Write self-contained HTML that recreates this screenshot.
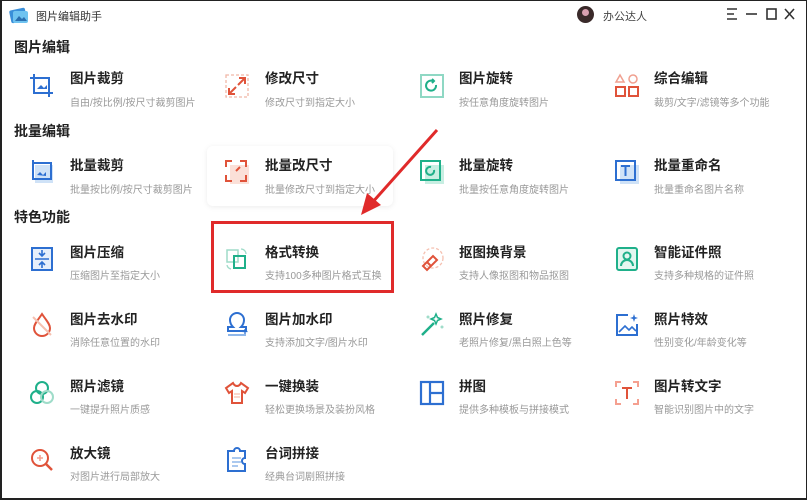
<!DOCTYPE html>
<html><head><meta charset="utf-8"><style>
*{margin:0;padding:0;box-sizing:border-box}
body{width:807px;height:500px;background:#fff;font-family:"Liberation Sans","Noto Sans CJK SC",sans-serif;position:relative;overflow:hidden}
.frame{position:absolute;left:0;top:0;width:807px;height:500px;border:2px solid #222;border-top-width:1px;border-right-width:1px}
.a{position:absolute}
.h{position:absolute;left:14px;font-size:14px;font-weight:bold;color:#222}
.card{position:absolute;width:186px;height:60px;border-radius:6px}
.t{position:absolute;font-size:13.5px;font-weight:bold;color:#222;white-space:nowrap}
.s{position:absolute;font-size:10px;color:#999;white-space:nowrap}
svg.i{position:absolute;width:26px;height:26px;fill:none;stroke-width:2}
</style></head><body>
<div class="frame"></div>
<svg class="a" style="left:8px;top:5px" width="22" height="20" viewBox="0 0 22 20"><rect x="2" y="4" width="16" height="13" rx="2" fill="#3a8fd9" transform="rotate(-12 10 10)"/><rect x="5" y="6" width="15" height="12" rx="2" fill="#6fc3f0"/><path d="M7 16l4-5 3 3 2-2 3 4z" fill="#2a6fb0"/></svg>
<div class="a" style="left:36px;top:8px;font-size:11px;color:#333">图片编辑助手</div>
<div class="a" style="left:577px;top:6px;width:17px;height:17px;border-radius:50%;background:#3a2a2a"></div>
<div class="a" style="left:582px;top:9px;width:7px;height:7px;border-radius:50%;background:#d9a0b0"></div>
<div class="a" style="left:603px;top:8px;font-size:11px;color:#444">办公达人</div>
<svg class="a" style="left:725px;top:7px" width="70" height="14" viewBox="0 0 70 14" stroke="#333" stroke-width="1.6" fill="none"><path d="M2 2h10M2 7h7M2 12h10"/><path d="M21 7h11"/><rect x="42" y="2" width="9" height="10"/><path d="M60 2l9 10M69 2l-9 10"/></svg>

<div class="h" style="top:37px">图片编辑</div>
<div class="h" style="top:121px">批量编辑</div>
<div class="h" style="top:207px">特色功能</div>

<!-- row icons & texts -->
<!-- Row1 y title 67 -->
<svg class="i" style="left:29px;top:73px" viewBox="0 0 26 26" stroke="#2d6fd1"><path d="M5 1v19h19M1 5h19v19"/><path d="M8 16l4-4 3 3 3-3v4z" fill="#2d6fd1" stroke="none"/></svg>
<div class="t" style="left:70px;top:67px">图片裁剪</div><div class="s" style="left:70px;top:94px">自由/按比例/按尺寸裁剪图片</div>
<svg class="i" style="left:224px;top:73px" viewBox="0 0 26 26"><rect x="2" y="2" width="22" height="22" stroke="#f0b8a8" stroke-dasharray="3 2" stroke-width="1.3"/><path d="M15 5h6v6M21 5l-7 7M11 21H5v-6M5 21l7-7" stroke="#e0533a"/></svg>
<div class="t" style="left:265px;top:67px">修改尺寸</div><div class="s" style="left:265px;top:94px">修改尺寸到指定大小</div>
<svg class="i" style="left:419px;top:73px" viewBox="0 0 26 26"><rect x="2" y="2" width="22" height="22" stroke="#8fd8c4"/><path d="M17 12a5 5 0 1 1-3-4M13 6l2 2-2 2" stroke="#1fb08a"/></svg>
<div class="t" style="left:459px;top:67px">图片旋转</div><div class="s" style="left:459px;top:94px">按任意角度旋转图片</div>
<svg class="i" style="left:614px;top:73px" viewBox="0 0 26 26"><path d="M6 2l4 7H2z" stroke="#f0a090" stroke-width="1.5"/><circle cx="19" cy="6" r="4" stroke="#f0a090" stroke-width="1.5"/><rect x="2" y="14" width="9" height="9" stroke="#e0533a"/><rect x="15" y="14" width="9" height="9" stroke="#e0533a"/></svg>
<div class="t" style="left:654px;top:67px">综合编辑</div><div class="s" style="left:654px;top:94px">裁剪/文字/滤镜等多个功能</div>

<!-- Row2 -->
<div class="card" style="left:207px;top:146px;box-shadow:0 1px 6px rgba(0,0,0,.08)"></div>
<svg class="i" style="left:29px;top:159px" viewBox="0 0 26 26"><rect x="6" y="6" width="18" height="18" fill="#cfe2f7" stroke="none"/><path d="M4 1v19h18V4H4" stroke="#2d6fd1"/><path d="M8 16l3-3 3 3 3-3v4z" fill="#2d6fd1"/></svg>
<div class="t" style="left:70px;top:154px">批量裁剪</div><div class="s" style="left:70px;top:181px">批量按比例/按尺寸裁剪图片</div>
<svg class="i" style="left:224px;top:159px" viewBox="0 0 26 26"><rect x="6" y="6" width="19" height="19" fill="#fbe0d8"/><path d="M2 8V2h6M16 2h6v6M22 16v6h-6M8 22H2v-6M16 8l-4 4" stroke="#e0533a"/></svg>
<div class="t" style="left:265px;top:154px">批量改尺寸</div><div class="s" style="left:265px;top:181px">批量修改尺寸到指定大小</div>
<svg class="i" style="left:419px;top:159px" viewBox="0 0 26 26"><rect x="6" y="6" width="19" height="19" fill="#c8eee2"/><rect x="2" y="2" width="19" height="19" stroke="#1fb08a"/><path d="M15 11a4 4 0 1 1-3-3" stroke="#1fb08a"/></svg>
<div class="t" style="left:459px;top:154px">批量旋转</div><div class="s" style="left:459px;top:181px">批量按任意角度旋转图片</div>
<svg class="i" style="left:614px;top:159px" viewBox="0 0 26 26"><rect x="6" y="6" width="19" height="19" fill="#cfe2f7"/><rect x="2" y="2" width="19" height="19" stroke="#2d6fd1"/><path d="M7 7h9M11.5 7v10" stroke="#2d6fd1"/></svg>
<div class="t" style="left:654px;top:154px">批量重命名</div><div class="s" style="left:654px;top:181px">批量重命名图片名称</div>

<!-- Row3 -->
<svg class="i" style="left:29px;top:246px" viewBox="0 0 26 26"><rect x="3" y="2" width="20" height="22" stroke="#2d6fd1" fill="#e6effb"/><path d="M6 13h14M13 4v6M10 7l3 3 3-3M13 22v-6M10 19l3-3 3 3" stroke="#2d6fd1" stroke-width="1.6"/></svg>
<div class="t" style="left:70px;top:241px">图片压缩</div><div class="s" style="left:70px;top:267px">压缩图片至指定大小</div>
<svg class="i" style="left:224px;top:246px" viewBox="0 0 26 26"><rect x="3" y="4" width="11" height="12" stroke="#9fdcc9" stroke-width="1.5"/><rect x="10" y="10" width="11" height="12" stroke="#1fb08a"/><path d="M17 3a5 5 0 0 1 5 5M3 19a5 5 0 0 0 4 4" stroke="#9fdcc9" stroke-width="1.3"/></svg>
<div class="t" style="left:265px;top:241px">格式转换</div><div class="s" style="left:265px;top:267px">支持100多种图片格式互换</div>
<svg class="i" style="left:419px;top:246px" viewBox="0 0 26 26"><circle cx="14" cy="12" r="10" stroke="#f5c0b0" stroke-dasharray="3 2" stroke-width="1.3"/><path d="M4 20l10-10 4 4-10 10z" stroke="#e0533a"/><path d="M8 16l4 4" stroke="#e0533a"/></svg>
<div class="t" style="left:459px;top:241px">抠图换背景</div><div class="s" style="left:459px;top:267px">支持人像抠图和物品抠图</div>
<svg class="i" style="left:614px;top:246px" viewBox="0 0 26 26"><rect x="3" y="2" width="20" height="22" rx="2" stroke="#1fb08a" fill="#e3f6f0"/><circle cx="13" cy="10" r="3.5" stroke="#1fb08a"/><path d="M7 20a6 6 0 0 1 12 0" stroke="#1fb08a"/></svg>
<div class="t" style="left:654px;top:241px">智能证件照</div><div class="s" style="left:654px;top:267px">支持多种规格的证件照</div>

<!-- Row4 -->
<svg class="i" style="left:29px;top:312px" viewBox="0 0 26 26"><path d="M13 2C9 8 5 12 5 16a8 8 0 0 0 16 0c0-4-4-8-8-14z" stroke="#e0533a"/><path d="M4 5l18 18" stroke="#f5c0b0"/></svg>
<div class="t" style="left:70px;top:308px">图片去水印</div><div class="s" style="left:70px;top:334px">消除任意位置的水印</div>
<svg class="i" style="left:224px;top:312px" viewBox="0 0 26 26"><path d="M9 15c-2-2-3-4-3-7a7 7 0 0 1 14 0c0 3-1 5-3 7h5v4H4v-4z" stroke="#2d6fd1"/><path d="M4 23h18" stroke="#8fb7ea"/><path d="M21 17v5M18.5 19.5h5" stroke="#2d6fd1" stroke-width="1.3"/></svg>
<div class="t" style="left:265px;top:308px">图片加水印</div><div class="s" style="left:265px;top:334px">支持添加文字/图片水印</div>
<svg class="i" style="left:419px;top:312px" viewBox="0 0 26 26"><path d="M3 23l12-12" stroke="#1fb08a" stroke-width="2.5"/><path d="M17 2l1.5 3.5L22 7l-3.5 1.5L17 12l-1.5-3.5L12 7l3.5-1.5z" stroke="#1fb08a" stroke-width="1.5"/><circle cx="23" cy="15" r="1.5" fill="#9fdcc9" stroke="none"/><circle cx="9" cy="5" r="1.5" fill="#9fdcc9" stroke="none"/></svg>
<div class="t" style="left:459px;top:308px">照片修复</div><div class="s" style="left:459px;top:334px">老照片修复/黑白照上色等</div>
<svg class="i" style="left:614px;top:312px" viewBox="0 0 26 26"><path d="M23 12v11H3V3h11" stroke="#2d6fd1"/><path d="M5 20l6-6 4 4 3-3 4 4" stroke="#2d6fd1" stroke-width="1.6"/><path d="M20 2l1 3 3 1-3 1-1 3-1-3-3-1 3-1z" fill="#2d6fd1" stroke="none"/></svg>
<div class="t" style="left:654px;top:308px">照片特效</div><div class="s" style="left:654px;top:334px">性别变化/年龄变化等</div>

<!-- Row5 -->
<svg class="i" style="left:29px;top:380px" viewBox="0 0 26 26"><circle cx="13" cy="8" r="6" stroke="#1fb08a"/><circle cx="8" cy="17" r="6" stroke="#1fb08a"/><circle cx="18" cy="17" r="6" stroke="#9fdcc9"/></svg>
<div class="t" style="left:70px;top:375px">照片滤镜</div><div class="s" style="left:70px;top:401px">一键提升照片质感</div>
<svg class="i" style="left:224px;top:380px" viewBox="0 0 26 26"><path d="M9 3L2 8l3 5 3-2v12h10V11l3 2 3-5-7-5c-1 2-2 3-4 3s-3-1-4-3z" stroke="#e0533a"/><path d="M10 14h6M10 17h6" stroke="#f5c0b0" stroke-width="1.3"/></svg>
<div class="t" style="left:265px;top:375px">一键换装</div><div class="s" style="left:265px;top:401px">轻松更换场景及装扮风格</div>
<svg class="i" style="left:419px;top:380px" viewBox="0 0 26 26"><rect x="2" y="2" width="22" height="22" stroke="#2d6fd1" stroke-width="2.2"/><path d="M11 2v22M11 13h13" stroke="#2d6fd1" stroke-width="2.2"/></svg>
<div class="t" style="left:459px;top:375px">拼图</div><div class="s" style="left:459px;top:401px">提供多种模板与拼接模式</div>
<svg class="i" style="left:614px;top:380px" viewBox="0 0 26 26"><path d="M2 7V2h5M19 2h5v5M24 19v5h-5M7 24H2v-5" stroke="#f5a090"/><path d="M8 8h10M13 8v11" stroke="#e0533a"/></svg>
<div class="t" style="left:654px;top:375px">图片转文字</div><div class="s" style="left:654px;top:401px">智能识别图片中的文字</div>

<!-- Row6 -->
<svg class="i" style="left:29px;top:447px" viewBox="0 0 26 26"><circle cx="11" cy="11" r="8" stroke="#e0533a"/><path d="M17 17l6 6" stroke="#e0533a" stroke-width="2.5"/><path d="M8 11h6M11 8v6" stroke="#f5a090" stroke-width="1.6"/></svg>
<div class="t" style="left:70px;top:442px">放大镜</div><div class="s" style="left:70px;top:468px">对图片进行局部放大</div>
<svg class="i" style="left:224px;top:447px" viewBox="0 0 26 26"><path d="M4 4h6a3 3 0 0 1 6 0h5v7a3 3 0 0 0 0 6v7H4z" stroke="#2d6fd1"/><path d="M8 11h9M8 15h9M8 19h6" stroke="#8fb7ea" stroke-width="1.6"/></svg>
<div class="t" style="left:265px;top:442px">台词拼接</div><div class="s" style="left:265px;top:468px">经典台词剧照拼接</div>

<!-- red box & arrow -->
<div class="a" style="left:211px;top:221px;width:183px;height:72px;border:3px solid #e02a2a"></div>
<svg class="a" style="left:355px;top:125px" width="90" height="95" viewBox="0 0 90 95"><path d="M82 5L16 79" stroke="#e02a2a" stroke-width="3" fill="none"/><path d="M6 90l6-22 14 12z" fill="#e02a2a"/></svg>
</body></html>
